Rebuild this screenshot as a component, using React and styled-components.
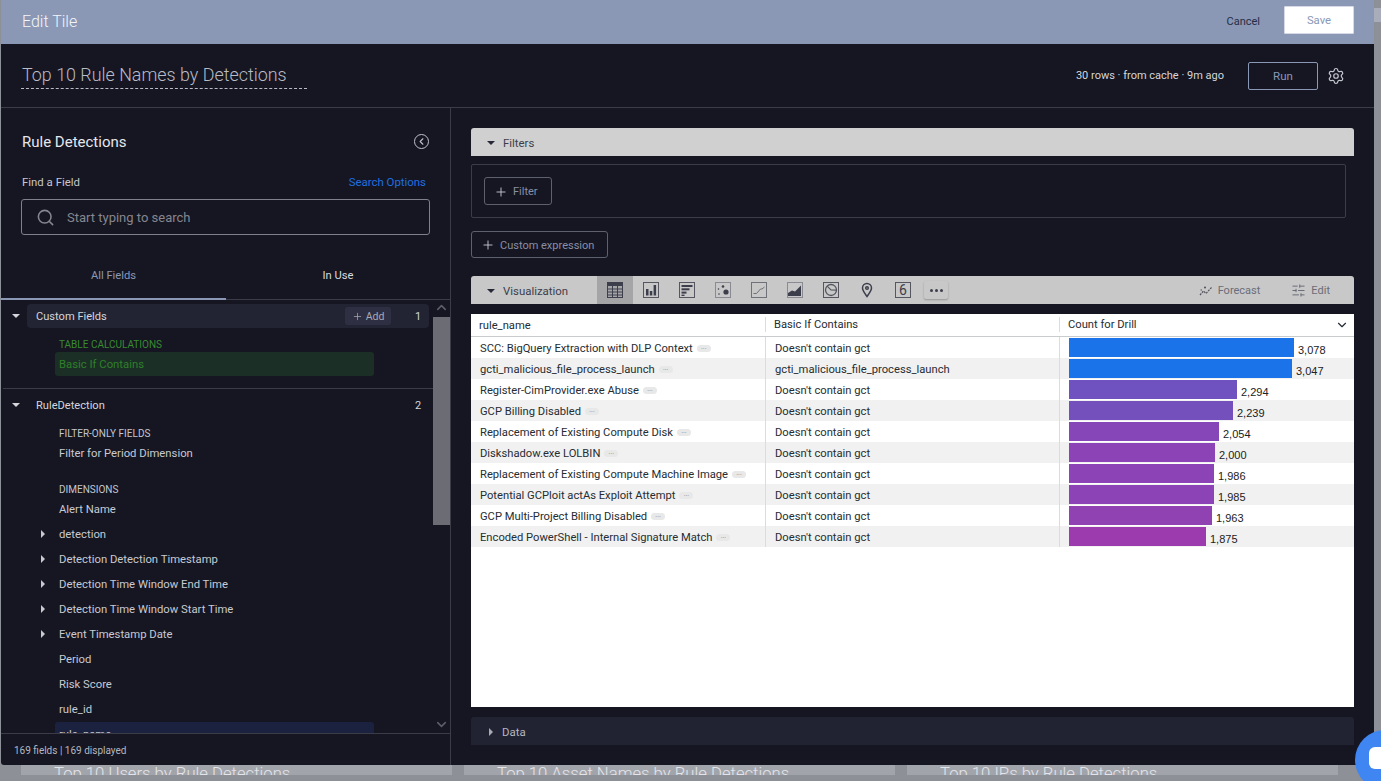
import React from "react";
import styled, { createGlobalStyle } from "styled-components";
import { Search, Settings, SlidersHorizontal, Plus, ChevronLeft, ChevronUp, ChevronDown } from "lucide-react";

const GlobalStyle = createGlobalStyle`
  * { box-sizing: border-box; }
  html, body { margin: 0; height: 781px; overflow: hidden; background: #8e9097; }
  body { font-family: Roboto, "Noto Sans", sans-serif; }
`;

const rows = [
  { name: "SCC: BigQuery Extraction with DLP Context", basic: "Doesn't contain gct", count: 3078, color: "#1a73e8" },
  { name: "gcti_malicious_file_process_launch", basic: "gcti_malicious_file_process_launch", count: 3047, color: "#1a73e8" },
  { name: "Register-CimProvider.exe Abuse", basic: "Doesn't contain gct", count: 2294, color: "#6f52bf" },
  { name: "GCP Billing Disabled", basic: "Doesn't contain gct", count: 2239, color: "#7450bd" },
  { name: "Replacement of Existing Compute Disk", basic: "Doesn't contain gct", count: 2054, color: "#8746b7" },
  { name: "Diskshadow.exe LOLBIN", basic: "Doesn't contain gct", count: 2000, color: "#8c43b5" },
  { name: "Replacement of Existing Compute Machine Image", basic: "Doesn't contain gct", count: 1986, color: "#8c43b5" },
  { name: "Potential GCPloit actAs Exploit Attempt", basic: "Doesn't contain gct", count: 1985, color: "#8c43b5" },
  { name: "GCP Multi-Project Billing Disabled", basic: "Doesn't contain gct", count: 1963, color: "#9042b2" },
  { name: "Encoded PowerShell - Internal Signature Match", basic: "Doesn't contain gct", count: 1875, color: "#9c3bad" },
];

const Page = styled.div`
  width: 1381px;
  height: 781px;
  overflow: hidden;
  position: relative;
  background: #8e9097;
  padding-left: 1px;
`;

const PageThumb = styled.div`
  position: absolute;
  right: 0;
  top: 8px;
  width: 7px;
  height: 14px;
  background: #a9adb9;
`;

const Modal = styled.div`
  width: 1373px;
  height: 765px;
  background: #151622;
  display: flex;
  flex-direction: column;
  border-bottom-left-radius: 3px;
  border-bottom-right-radius: 3px;
`;

const Header = styled.div`
  height: 44px;
  flex: none;
  background: #8a98b6;
  display: flex;
  align-items: center;
  padding: 0 20px 2px 21px;
`;

const HeaderTitle = styled.div`
  font-size: 16px;
  font-weight: 300;
  color: #f4f5f8;
  flex: 1;
`;

const CancelLink = styled.span`
  font-size: 11px;
  color: #262d45;
  margin-right: 24px;
`;

const SaveButton = styled.div`
  width: 70px;
  height: 28px;
  background: #fff;
  border: 1px solid #d5dae4;
  color: #8a98b6;
  font-size: 11.3px;
  display: flex;
  align-items: center;
  justify-content: center;
  border-radius: 1px;
  margin-bottom: 2px;
`;

const TitleBar = styled.div`
  height: 64px;
  flex: none;
  display: flex;
  align-items: center;
  border-bottom: 1px solid #3b3c48;
  padding: 0 29px 0 20px;
`;

const TitleInput = styled.div`
  width: 286px;
  height: 26px;
  border-bottom: 1px dashed #b8bac4;
  font-size: 17.9px;
  font-weight: 300;
  color: #b9bbc5;
  padding-left: 1px;
  white-space: nowrap;
  line-height: 24px;
`;

const RunInfo = styled.div`
  margin-left: auto;
  font-size: 11px;
  color: #d4d6dc;
`;

const RunButton = styled.div`
  width: 70px;
  height: 28px;
  margin: 0 9px 0 24px;
  border: 1px solid #8a98b6;
  border-radius: 2px;
  color: #8a98b6;
  font-size: 11.5px;
  display: flex;
  align-items: center;
  justify-content: center;
`;

const Body = styled.div`
  flex: 1;
  min-height: 0;
  display: flex;
`;

const Sidebar = styled.aside`
  width: 450px;
  flex: none;
  border-right: 1px solid #3b3c48;
  display: flex;
  flex-direction: column;
`;

const SideTop = styled.div`
  height: 149px;
  flex: none;
  padding: 23px 20px 0 20px;
`;

const SideTitleRow = styled.div`
  display: flex;
  align-items: center;
  justify-content: space-between;
  height: 22px;
`;

const SideTitle = styled.div`
  font-size: 15px;
  color: #e6e7ec;
  padding-left: 1px;
`;

const CollapseCircle = styled.div`
  width: 15px;
  height: 15px;
  border: 1px solid #c0c2ca;
  border-radius: 50%;
  display: flex;
  align-items: center;
  justify-content: center;
  color: #c0c2ca;
  margin: -2px 1px 0 0;
`;

const FindRow = styled.div`
  display: flex;
  justify-content: space-between;
  margin-top: 22px;
  padding: 0 4px 0 1px;
  font-size: 11.4px;
  line-height: 15px;
  color: #c4c6cf;
`;

const SearchLink = styled.span`
  color: #1f6fe0;
`;

const SearchBox = styled.div`
  height: 36px;
  margin-top: 9px;
  border: 1px solid #7f808c;
  border-radius: 3px;
  display: flex;
  align-items: center;
  padding-left: 14px;
  gap: 12px;
  color: #85868f;
  font-size: 13px;
`;

const Tabs = styled.div`
  height: 43px;
  flex: none;
  display: grid;
  grid-template-columns: 225px 224px;
  border-bottom: 1px solid #3b3c48;
`;

const Tab = styled.div`
  display: flex;
  align-items: center;
  justify-content: center;
  font-size: 11.2px;
  padding-bottom: 4px;
  color: ${(p) => (p.$active ? "#8a98b6" : "#d8dae0")};
  border-bottom: 2px solid ${(p) => (p.$active ? "#8a98b6" : "transparent")};
  margin-bottom: -1px;
`;

const ListArea = styled.div`
  flex: 1;
  min-height: 0;
  display: flex;
`;

const FieldList = styled.div`
  flex: 1;
  min-width: 0;
  overflow: hidden;
  padding-top: 4px;
`;

const GroupRow = styled.div`
  height: 24px;
  margin: 0 4px 0 26px;
  padding: 0 4px 0 9px;
  display: flex;
  align-items: center;
  position: relative;
  font-size: 11.1px;
  color: #d4d6dc;
  border-radius: 4px;
  background: ${(p) => (p.$filled ? "#232433" : "transparent")};
`;

const GroupName = styled.span`
  flex: 1;
`;

const GroupCaret = styled.span`
  position: absolute;
  left: -15px;
  top: 10px;
  border-left: 4px solid transparent;
  border-right: 4px solid transparent;
  border-top: 4px solid #d4d6dc;
`;

const GroupCount = styled.span`
  width: 14px;
  font-size: 11px;
  text-align: center;
`;

const AddButton = styled.span`
  width: 46px;
  height: 18px;
  margin-right: 20px;
  background: #2e2f42;
  border-radius: 3px;
  display: flex;
  align-items: center;
  justify-content: center;
  gap: 3px;
  font-size: 10.5px;
  color: #a8aab4;
`;

const SectionLabel = styled.div`
  height: 14px;
  line-height: 14px;
  padding-left: 58px;
  font-size: 10px;
  color: ${(p) => (p.$green ? "#3a8a30" : "#c4c6cf")};
  margin-top: ${(p) => p.$top || 0}px;
`;

const FieldRow = styled.div`
  height: 25px;
  display: flex;
  align-items: center;
  position: relative;
  margin-left: 54px;
  width: 319px;
  padding-left: 4px;
  font-size: 11.3px;
  color: #c8cad2;
  border-radius: 3px;
  white-space: nowrap;
  ${(p) => p.$green && "background: #1c2f26; color: #2f7f2a; height: 24px;"}
  ${(p) => p.$selected && "background: #1b2240;"}
`;

const FieldCaret = styled.span`
  position: absolute;
  left: -14px;
  top: 8px;
  border-top: 4px solid transparent;
  border-bottom: 4px solid transparent;
  border-left: 4px solid #c8cad2;
`;

const Divider = styled.div`
  height: 1px;
  background: #3b3c48;
  margin: 12px 0 4px 2px;
`;

const ScrollTrack = styled.div`
  width: 17px;
  flex: none;
  display: flex;
  flex-direction: column;
  align-items: center;
  color: #5d5e68;
`;

const ScrollThumb = styled.div`
  width: 17px;
  height: 208px;
  background: #6c6d74;
`;

const ScrollEnd = styled.div`
  margin-top: ${(p) => (p.$bottom ? "auto" : "0")};
  height: ${(p) => (p.$bottom ? "16px" : "17px")};
  display: flex;
  align-items: flex-start;
`;

const SideFooter = styled.div`
  height: 32px;
  flex: none;
  border-top: 1px solid #3b3c48;
  display: flex;
  align-items: center;
  padding: 1px 0 0 13px;
  font-size: 10px;
  color: #b4b6c0;
`;

const Main = styled.main`
  flex: 1;
  min-width: 0;
  padding: 20px 20px 0 20px;
  display: flex;
  flex-direction: column;
`;

const SectionBar = styled.div`
  height: 28px;
  flex: none;
  display: flex;
  align-items: center;
  padding: 1px 0 0 16px;
  font-size: 11.4px;
  color: ${(p) => (p.$dark ? "#b4b6c0" : "#3c3e4c")};
  background: ${(p) => (p.$dark ? "#222332" : p.$soft ? "#c8c8c8" : "#d0d0d0")};
  border-radius: 3px 3px 0 0;
  margin-top: ${(p) => p.$top || 0}px;
`;

const BarCaret = styled.span`
  width: 0;
  height: 0;
  margin-right: 8px;
  border-left: 4.5px solid transparent;
  border-right: 4.5px solid transparent;
  border-top: 4.5px solid #262836;
`;

const SideCaret = styled.span`
  width: 0;
  height: 0;
  margin: 0 9px 0 2px;
  border-top: 4px solid transparent;
  border-bottom: 4px solid transparent;
  border-left: 4px solid #a8aab4;
`;

const FilterBox = styled.div`
  height: 54px;
  flex: none;
  width: 875px;
  margin-top: 8px;
  border: 1px solid #3b3c48;
  border-radius: 2px;
  padding: 12px;
`;

const OutlineButton = styled.div`
  display: inline-flex;
  align-items: center;
  height: 100%;
  padding: 1px 13px 0 9px;
  gap: 5px;
  border: 1px solid #5f606e;
  border-radius: 3px;
  color: #8a8ea4;
  font-size: 11px;
`;

const ExpressionRow = styled.div`
  margin-top: 13px;
  height: 27px;
  flex: none;
  display: flex;
`;

const VizLabel = styled.span`
  width: 94px;
  flex: none;
`;

const VizTabs = styled.div`
  display: flex;
  height: 28px;
  margin-top: -1px;
`;

const VizTab = styled.div`
  width: 36px;
  display: flex;
  align-items: center;
  justify-content: center;
  background: ${(p) => (p.$active ? "#a5a5a8" : "transparent")};
`;

const MoreTab = styled.div`
  width: 24px;
  height: 18px;
  margin: 5px 0 0 3px;
  border-radius: 2px;
  display: flex;
  align-items: center;
  justify-content: center;
  gap: 2px;
  box-shadow: 0 1px 2px rgba(0, 0, 0, 0.25);
`;

const MoreDot = styled.i`
  width: 3px;
  height: 3px;
  border-radius: 50%;
  background: #3c3e4c;
`;

const NumberBox = styled.div`
  width: 16px;
  height: 16px;
  border: 1px solid #55565f;
  color: #3c3e4c;
  font-size: 14px;
  line-height: 14px;
  text-align: center;
`;

const VizActions = styled.div`
  margin-left: auto;
  display: flex;
  align-items: center;
  padding-right: 24px;
  color: #6b6d78;
  font-size: 11px;
`;

const VizAction = styled.span`
  display: flex;
  align-items: center;
  gap: 5px;
  margin-left: ${(p) => p.$left || 0}px;
`;

const Table = styled.div`
  height: 393px;
  flex: none;
  margin-top: 10px;
  background: #fff;
  color: #262d33;
  font-size: 11.2px;
`;

const HeadRow = styled.div`
  height: 23px;
  display: grid;
  grid-template-columns: 294px 294px 295px;
  border-bottom: 1px solid #c8cccd;
  padding-bottom: 1px;
`;

const HeadCell = styled.div`
  position: relative;
  display: flex;
  align-items: center;
  padding: 2px 0 0 8px;
  &:not(:first-child) { border-left: 1px solid #dcdcdc; margin: 3px 0; padding-top: 0; }
`;

const SortIcon = styled.span`
  position: absolute;
  right: 5px;
  top: 1px;
  color: #262d33;
  display: flex;
`;

const Row = styled.div`
  height: 21px;
  display: grid;
  grid-template-columns: 294px 294px 295px;
  background: ${(p) => (p.$odd ? "#f1f1f1" : "#fff")};
`;

const Cell = styled.div`
  display: flex;
  align-items: center;
  padding: ${(p) => (p.$bar ? "0" : "2px")} 0 0 9px;
  white-space: nowrap;
  &:not(:first-child) { border-left: 1px solid #dcdcdc; }
`;

const Pill = styled.span`
  width: 14px;
  height: 7px;
  margin-left: 4px;
  border-radius: 4px;
  background: #e8e8e8;
  color: #8a8a8a;
  font-size: 7px;
  line-height: 4px;
  text-align: center;
`;

const Bar = styled.div`
  height: 19px;
  background: ${(p) => p.$color};
`;

const BarValue = styled.span`
  font-family: "Liberation Sans", Arial, sans-serif;
  font-size: 11px;
  margin: 5px 0 0 4px;
  color: #222;
`;

const Tiles = styled.div`
  height: 10px;
  display: grid;
  grid-template-columns: 431px 431px 431px;
  gap: 12px;
  padding-left: 20px;
`;

const Tile = styled.div`
  height: 10px;
  background: #a2a4ab;
  padding: 0 0 0 33px;
  overflow: hidden;
  font-size: 16.7px;
  font-weight: 300;
  line-height: 18px;
  color: #e4e5ea;
  white-space: nowrap;
`;

const ChatBubble = styled.div`
  position: absolute;
  left: 1355px;
  top: 730px;
  width: 60px;
  height: 60px;
  border-radius: 50%;
  background: #3f86f2;
  padding: 17px 0 0 14px;
`;

const ChatInner = styled.div`
  width: 20px;
  height: 22px;
  background: #fff;
  border-radius: 6px;
`;

const TableIcon = () => (
  <svg width="16" height="16" viewBox="0 0 16 16" fill="none" stroke="#3c3e4c" strokeWidth="1">
    <rect x="0.5" y="0.5" width="15" height="15" />
    <rect x="0.5" y="0.5" width="15" height="3" fill="#3c3e4c" />
    <path d="M0 7h16M0 10h16M0 13h16M5.500 3v13M10.500 3v13" />
  </svg>
);

const ColumnIcon = () => (
  <svg width="16" height="16" viewBox="0 0 16 16" fill="#3c3e4c">
    <rect x="0.5" y="0.5" width="15" height="15" fill="none" stroke="#55565f" />
    <rect x="3" y="7" width="2.500" height="6.500" />
    <rect x="6.800" y="9" width="2.500" height="4.500" />
    <rect x="10.600" y="3" width="2.500" height="10.500" />
  </svg>
);

const ListIcon = () => (
  <svg width="16" height="16" viewBox="0 0 16 16" fill="#3c3e4c">
    <rect x="0.5" y="0.5" width="15" height="15" fill="none" stroke="#55565f" />
    <rect x="2.500" y="3" width="11" height="2" />
    <rect x="2.500" y="6.300" width="8" height="2" />
    <rect x="2.500" y="9.600" width="5" height="2" />
    <rect x="2.500" y="12.600" width="3" height="1.400" />
  </svg>
);

const ScatterIcon = () => (
  <svg width="16" height="16" viewBox="0 0 16 16" fill="#3c3e4c">
    <rect x="0.5" y="0.5" width="15" height="15" fill="none" stroke="#8a8b92" />
    <circle cx="11" cy="10" r="2.600" />
    <circle cx="8" cy="4.500" r="1.300" />
    <circle cx="3.500" cy="7" r="0.800" />
    <circle cx="4" cy="12" r="0.800" />
  </svg>
);

const LineIcon = () => (
  <svg width="16" height="16" viewBox="0 0 16 16" fill="none" stroke="#6f7078">
    <rect x="0.5" y="0.5" width="15" height="15" />
    <path d="M2.500 11.500h3l4-4.500h1.500l2.500-2" />
  </svg>
);

const AreaIcon = () => (
  <svg width="16" height="16" viewBox="0 0 16 16">
    <rect x="0.5" y="0.5" width="15" height="15" fill="none" stroke="#8a8b92" />
    <path d="M1 14v-3l4-2.500 3 1 6-6v10.500z" fill="#3c3e4c" />
  </svg>
);

const PieIcon = () => (
  <svg width="16" height="16" viewBox="0 0 16 16" fill="none" stroke="#55565f">
    <rect x="0.5" y="0.5" width="15" height="15" />
    <circle cx="8" cy="8" r="5.500" strokeWidth="1.300" />
    <path d="M8 2.500V8l3.800 4" strokeWidth="1.100" transform="rotate(-45 8 8)" />
  </svg>
);

const PinIcon = () => (
  <svg width="12" height="16" viewBox="0 0 12 16" fill="none" stroke="#3c3e4c" strokeWidth="1.500">
    <path d="M6 14.500C3.500 11 1.500 8.500 1.500 6a4.500 4.500 0 0 1 9 0c0 2.500-2 5-4.500 8.500z" />
    <circle cx="6" cy="6" r="1.300" />
  </svg>
);

const ForecastIcon = () => (
  <svg width="14" height="14" viewBox="0 0 14 14" fill="none" stroke="#55565f" strokeWidth="1.200">
    <path d="M1 11l3.500-4 2.500 2.500 5.500-6" strokeDasharray="2 1" />
    <path d="M5 3.500h2M6 2.500v2M1.500 6h1.500" />
  </svg>
);

export default function App() {
  const scale = 225 / 3078;
  return (
    <Page>
      <GlobalStyle />
      <PageThumb />
      <Modal>
        <Header>
          <HeaderTitle>Edit Tile</HeaderTitle>
          <CancelLink>Cancel</CancelLink>
          <SaveButton>Save</SaveButton>
        </Header>
        <TitleBar>
          <TitleInput>Top 10 Rule Names by Detections</TitleInput>
          <RunInfo>30 rows · from cache · 9m ago</RunInfo>
          <RunButton>Run</RunButton>
          <Settings size={18} color="#c4c6cf" strokeWidth={1.6} />
        </TitleBar>
        <Body>
          <Sidebar>
            <SideTop>
              <SideTitleRow>
                <SideTitle>Rule Detections</SideTitle>
                <CollapseCircle>
                  <ChevronLeft size={11} strokeWidth={2.4} />
                </CollapseCircle>
              </SideTitleRow>
              <FindRow>
                <span>Find a Field</span>
                <SearchLink>Search Options</SearchLink>
              </FindRow>
              <SearchBox>
                <Search size={19} color="#85868f" strokeWidth={2} />
                <span>Start typing to search</span>
              </SearchBox>
            </SideTop>
            <Tabs>
              <Tab $active>All Fields</Tab>
              <Tab>In Use</Tab>
            </Tabs>
            <ListArea>
              <FieldList>
                <GroupRow $filled>
                  <GroupCaret />
                  <GroupName>Custom Fields</GroupName>
                  <AddButton>
                    <Plus size={11} strokeWidth={1.6} />
                    Add
                  </AddButton>
                  <GroupCount>1</GroupCount>
                </GroupRow>
                <SectionLabel $green $top={10}>TABLE CALCULATIONS</SectionLabel>
                <FieldRow $green>Basic If Contains</FieldRow>
                <Divider />
                <GroupRow>
                  <GroupCaret />
                  <GroupName>RuleDetection</GroupName>
                  <GroupCount>2</GroupCount>
                </GroupRow>
                <SectionLabel $top={10}>FILTER-ONLY FIELDS</SectionLabel>
                <FieldRow>Filter for Period Dimension</FieldRow>
                <SectionLabel $top={17}>DIMENSIONS</SectionLabel>
                <FieldRow>Alert Name</FieldRow>
                <FieldRow><FieldCaret />detection</FieldRow>
                <FieldRow><FieldCaret />Detection Detection Timestamp</FieldRow>
                <FieldRow><FieldCaret />Detection Time Window End Time</FieldRow>
                <FieldRow><FieldCaret />Detection Time Window Start Time</FieldRow>
                <FieldRow><FieldCaret />Event Timestamp Date</FieldRow>
                <FieldRow>Period</FieldRow>
                <FieldRow>Risk Score</FieldRow>
                <FieldRow>rule_id</FieldRow>
                <FieldRow $selected>rule_name</FieldRow>
              </FieldList>
              <ScrollTrack>
                <ScrollEnd><ChevronUp size={15} strokeWidth={2.4} /></ScrollEnd>
                <ScrollThumb />
                <ScrollEnd $bottom><ChevronDown size={15} strokeWidth={2.4} /></ScrollEnd>
              </ScrollTrack>
            </ListArea>
            <SideFooter>169 fields | 169 displayed</SideFooter>
          </Sidebar>
          <Main>
            <SectionBar>
              <BarCaret />
              Filters
            </SectionBar>
            <FilterBox>
              <OutlineButton>
                <Plus size={14} strokeWidth={1.6} color="#c4c6cf" />
                Filter
              </OutlineButton>
            </FilterBox>
            <ExpressionRow>
              <OutlineButton>
                <Plus size={14} strokeWidth={1.6} color="#c4c6cf" />
                Custom expression
              </OutlineButton>
            </ExpressionRow>
            <SectionBar $soft $top={18}>
              <BarCaret />
              <VizLabel>Visualization</VizLabel>
              <VizTabs>
                <VizTab $active><TableIcon /></VizTab>
                <VizTab><ColumnIcon /></VizTab>
                <VizTab><ListIcon /></VizTab>
                <VizTab><ScatterIcon /></VizTab>
                <VizTab><LineIcon /></VizTab>
                <VizTab><AreaIcon /></VizTab>
                <VizTab><PieIcon /></VizTab>
                <VizTab><PinIcon /></VizTab>
                <VizTab><NumberBox>6</NumberBox></VizTab>
                <MoreTab><MoreDot /><MoreDot /><MoreDot /></MoreTab>
              </VizTabs>
              <VizActions>
                <VizAction><ForecastIcon />Forecast</VizAction>
                <VizAction $left={31}>
                  <SlidersHorizontal size={15} strokeWidth={1.6} />
                  Edit
                </VizAction>
              </VizActions>
            </SectionBar>
            <Table>
              <HeadRow>
                <HeadCell>rule_name</HeadCell>
                <HeadCell>Basic If Contains</HeadCell>
                <HeadCell>
                  Count for Drill
                  <SortIcon><ChevronDown size={14} strokeWidth={2} /></SortIcon>
                </HeadCell>
              </HeadRow>
              {rows.map((r, i) => (
                <Row key={r.name} $odd={i % 2 === 1}>
                  <Cell>{r.name}<Pill>...</Pill></Cell>
                  <Cell>{r.basic}</Cell>
                  <Cell $bar>
                    <Bar $color={r.color} style={{ width: Math.round(r.count * scale) }} />
                    <BarValue>{r.count.toLocaleString("en-US")}</BarValue>
                  </Cell>
                </Row>
              ))}
            </Table>
            <SectionBar $dark $top={10}>
              <SideCaret />
              Data
            </SectionBar>
          </Main>
        </Body>
      </Modal>
      <Tiles>
        <Tile>Top 10 Users by Rule Detections</Tile>
        <Tile>Top 10 Asset Names by Rule Detections</Tile>
        <Tile>Top 10 IPs by Rule Detections</Tile>
      </Tiles>
      <ChatBubble><ChatInner /></ChatBubble>
    </Page>
  );
}
